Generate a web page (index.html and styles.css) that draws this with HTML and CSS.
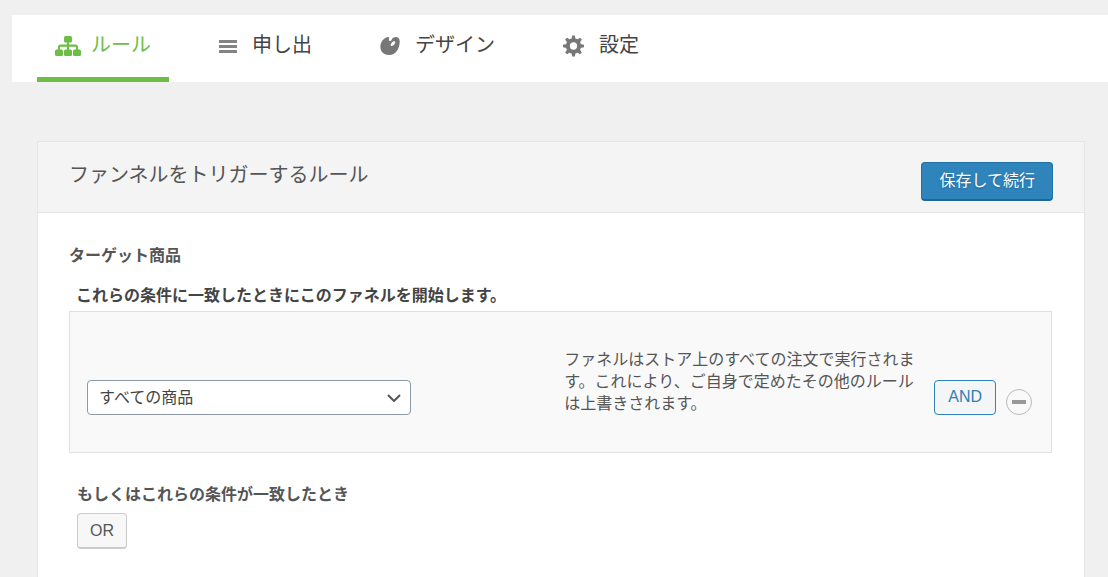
FILE: index.html
```
<!DOCTYPE html>
<html lang="ja">
<head>
  <meta charset="UTF-8">
  <meta name="viewport" content="width=device-width, initial-scale=1.0">
  <title>ルール</title>
  <link rel="stylesheet" href="styles.css">
</head>
<body>

  <nav class="tabs">
    <a href="#rules" class="tab active">
      <svg class="tab-icon" width="26" height="22" viewBox="0 0 26 22" fill="currentColor">
        <rect x="9" y="1" width="8" height="6.500" rx="1.500"/>
        <rect x="0" y="14.500" width="8" height="6.500" rx="1.500"/>
        <rect x="9" y="14.500" width="8" height="6.500" rx="1.500"/>
        <rect x="18" y="14.500" width="8" height="6.500" rx="1.500"/>
        <path d="M13 6v10M4 16v-3.500q0-1.800 1.800-1.800h14.400q1.800 0 1.800 1.800V16" fill="none" stroke="currentColor" stroke-width="2.200"/>
      </svg>
      <span>ルール</span>
    </a>
    <a href="#offers" class="tab">
      <svg class="tab-icon" width="18" height="22" viewBox="0 0 18 22" fill="currentColor">
        <path d="M0 5h18v3H0zM0 10h18v3H0zM0 15h18v3H0z" opacity=".9"/>
      </svg>
      <span>申し出</span>
    </a>
    <a href="#design" class="tab">
      <svg class="tab-icon" width="20" height="22" viewBox="0 0 20 22" fill="currentColor">
        <path fill-rule="evenodd" d="M7 2.300C8.600 1.700 9.600 2.400 9 4C8.500 5.300 9.300 6.400 10.500 5.900C12 5.200 11.500 3.600 13.200 2.700C16.500 1.200 19.700 2.200 19.700 6.500C19.700 14 15.500 20 9.500 20C4 20 .4 16.800 .4 12C.4 7.500 3 3.500 7 2.300zM10.900 10.700C11.600 11.500 13.300 10.800 14.300 9.600C15.300 8.400 15.600 7.200 14.900 6.600C14.200 6 12.700 6.600 11.700 7.800C10.700 9 10.300 10.100 10.900 10.700z"/>
      </svg>
      <span>デザイン</span>
    </a>
    <a href="#settings" class="tab">
      <svg class="tab-icon" width="21" height="22" viewBox="0 0 22 22" fill="currentColor">
        <path fill-rule="evenodd" d="M11 3a8 8 0 1 0 0 16a8 8 0 1 0 0-16zM11 7.200a3.800 3.800 0 1 1 0 7.600a3.800 3.800 0 1 1 0-7.600z"/>
        <g id="teeth">
          <path d="M9.600 0h2.800l.7 4H8.900zM9.600 22h2.800l.7-4H8.900zM0 9.600v2.800l4 .7V8.900zM22 9.600v2.800l-4 .7V8.900z"/>
        </g>
        <use href="#teeth" transform="rotate(45 11 11)"/>
      </svg>
      <span>設定</span>
    </a>
  </nav>

  <main class="panel">
    <div class="panel-header">
      <h1>ファンネルをトリガーするルール</h1>
      <button type="button" class="save-btn">保存して続行</button>
    </div>

    <div class="panel-body">
      <h2>ターゲット商品</h2>
      <label class="rule-label" for="rule">これらの条件に一致したときにこのファネルを開始します。</label>

      <div class="rule-box">
        <div class="select-wrap">
          <select id="rule">
            <option>すべての商品</option>
          </select>
          <svg class="arrow" width="14" height="8" viewBox="0 0 14 8" fill="none" stroke="#555" stroke-width="2">
            <path d="M1 1l6 6l6-6"/>
          </svg>
        </div>
        <p class="rule-desc">ファネルはストア上のすべての注文で実行されます。これにより、ご自身で定めたその他のルールは上書きされます。</p>
        <div class="rule-actions">
          <button type="button" class="and-btn">AND</button>
          <button type="button" class="remove-btn" aria-label="削除"></button>
        </div>
      </div>

      <h3>もしくはこれらの条件が一致したとき</h3>
      <button type="button" class="or-btn">OR</button>
    </div>
  </main>

</body>
</html>
```
FILE: styles.css
```
* {
  box-sizing: border-box;
}

body {
  margin: 0;
  padding: 15px 0 0 12px;
  background: #f0f0f0;
  color: #555;
  font-family: "Liberation Sans", "Noto Sans CJK JP", sans-serif;
  font-size: 16px;
}

button,
select {
  font-family: inherit;
  font-size: 16px;
}

.tabs {
  display: flex;
  gap: 32px;
  padding: 0 25px;
  background: #fff;
}

.tab {
  display: flex;
  gap: 15px;
  height: 67px;
  padding: 15px 18px 0;
  color: #444;
  font-size: 20px;
  line-height: 30px;
  text-decoration: none;
}

.tab.active {
  gap: 10px;
  border-bottom: 5px solid #6dbe45;
  color: #6dbe45;
}

.tab-icon {
  margin-top: 5px;
  color: #777;
}

.tab.active .tab-icon {
  color: #6dbe45;
}

.panel {
  margin: 59px 23px 0 25px;
  background: #fff;
  border: 1px solid #e5e5e5;
  border-bottom: none;
}

.panel-header {
  display: flex;
  justify-content: space-between;
  align-items: flex-start;
  padding: 20px 31px 11px;
  background: #f4f4f4;
  border-bottom: 1px solid #e5e5e5;
}

h1 {
  margin: 0;
  font-size: 20px;
  font-weight: 400;
  line-height: 26px;
}

.save-btn {
  height: 39px;
  padding: 0 17px 4px;
  background: #2e84bb;
  border: 1px solid #2271a6;
  border-bottom: 2px solid #1f6696;
  border-radius: 4px;
  color: #fff;
  text-shadow: 0 1px 2px #1f6696;
  cursor: pointer;
}

.panel-body {
  padding: 31px 32px 28px 31px;
}

h2,
h3,
.rule-label {
  display: block;
  margin: 0;
  font-size: 16px;
  font-weight: 700;
  line-height: 24px;
}

.rule-label {
  margin: 16px 0 3px;
  padding-left: 7px;
  color: #444;
}

.rule-box {
  display: flex;
  align-items: center;
  min-height: 142px;
  padding: 0 19px 0 17px;
  background: #f9f9f9;
  border: 1px solid #e0e0e0;
}

.select-wrap {
  position: relative;
  width: 324px;
  margin-top: 30px;
}

select {
  width: 100%;
  height: 35px;
  padding: 0 36px 0 11px;
  appearance: none;
  background: #fff;
  border: 1px solid #8c98a4;
  border-radius: 4px;
  color: #444;
}

.arrow {
  position: absolute;
  top: 14px;
  right: 10px;
  pointer-events: none;
}

.rule-desc {
  width: 356px;
  margin: 0 14px 0 auto;
  line-height: 22px;
}

.rule-actions {
  display: flex;
  align-items: flex-end;
  gap: 10px;
  margin-top: 30px;
}

.and-btn {
  height: 35px;
  padding: 0 13px;
  background: #f3f5f6;
  border: 1px solid #2e84bb;
  border-radius: 4px;
  color: #2e7fb3;
  cursor: pointer;
}

.remove-btn {
  display: flex;
  justify-content: center;
  align-items: center;
  width: 26px;
  height: 26px;
  padding: 0;
  background: #f9f9f9;
  border: 1px solid #bbb;
  border-radius: 50%;
  cursor: pointer;
}

.remove-btn::before {
  content: "";
  width: 14px;
  height: 4px;
  background: #999;
}

h3 {
  margin-top: 30px;
  padding-left: 8px;
}

.or-btn {
  height: 36px;
  margin: 6px 0 0 8px;
  padding: 0 12px;
  background: #f7f7f7;
  border: 1px solid #ccc;
  border-bottom-width: 2px;
  border-radius: 4px;
  color: #555;
  cursor: pointer;
}
```
